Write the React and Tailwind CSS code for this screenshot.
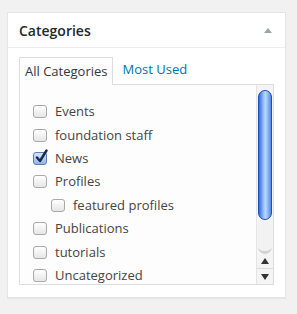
import React from "react";

const items = [
  { label: "Events" },
  { label: "foundation staff" },
  { label: "News", checked: true },
  { label: "Profiles" },
  { label: "featured profiles", child: true },
  { label: "Publications" },
  { label: "tutorials" },
  { label: "Uncategorized" },
];

const Checkbox = ({ checked }) => (
  <span
    className={
      "relative inline-block w-[14px] h-[13px] rounded-[3px] border shrink-0 " +
      (checked
        ? "border-[#5b7fb5] bg-gradient-to-b from-[#d6e6fb] to-[#8fb6ea]"
        : "border-[#a9a9a9] bg-gradient-to-b from-white to-[#e6e6e6]")
    }
  >
    {checked && (
      <svg
        className="absolute left-[1px] top-[-4px]"
        width="13"
        height="15"
        viewBox="0 0 13 15"
      >
        <path
          d="M2 8.5 L5 12 L11.5 1.5"
          fill="none"
          stroke="#1c2a4a"
          strokeWidth="2.4"
          strokeLinecap="round"
          strokeLinejoin="round"
        />
      </svg>
    )}
  </span>
);

const Scrollbar = () => (
  <div className="w-[17px] shrink-0 flex flex-col border-l border-[#e4e4e4] bg-[#f4f4f4]">
    <div className="flex-1 flex flex-col items-center pt-[5px]">
      <div className="w-[14px] rounded-t-[7px] bg-gradient-to-b from-[#ececec] to-[#f7f7f7] flex-1 flex flex-col">
        <div className="h-[130px] w-[14px] rounded-full border border-[#1b4fb4] bg-[linear-gradient(to_right,#2f6ee0,#9cc4f7_40%,#bcd8fb_55%,#4d8ae8)]" />
        <div className="flex-1 rounded-b-[7px] border-b-[3px] border-[#d3d3d3] bg-[#f2f2f2]" />
      </div>
    </div>
    <div className="h-[15px] flex items-center justify-center border-b border-[#dcdcdc]">
      <span className="w-0 h-0 border-l-[4px] border-r-[4px] border-b-[6px] border-l-transparent border-r-transparent border-b-[#333]" />
    </div>
    <div className="h-[15px] flex items-center justify-center">
      <span className="w-0 h-0 border-l-[4px] border-r-[4px] border-t-[6px] border-l-transparent border-r-transparent border-t-[#333]" />
    </div>
  </div>
);

export default function App() {
  return (
    <div
      className="w-[297px] h-[314px] bg-[#f1f1f1] pt-[12px] pl-[7px]"
      style={{ fontFamily: '"Open Sans", "Liberation Sans", sans-serif' }}
    >
      <div className="w-[279px] h-[286px] bg-white border border-[#e5e5e5] shadow-[0_1px_1px_rgba(0,0,0,0.04)]">
        <div className="h-[35px] flex items-center justify-between pl-[11px] pr-[13px] border-b border-[#eeeeee]">
          <h2 className="text-[14px] font-semibold text-[#23282d] leading-none pt-[1px]">
            Categories
          </h2>
          <span className="w-0 h-0 border-l-[4px] border-r-[4px] border-b-[5px] border-l-transparent border-r-transparent border-b-[#a0a5aa] mt-[1px]" />
        </div>

        <div className="pt-[8px] pl-[11px]">
          <div className="flex items-end">
            <div className="h-[28px] px-[5px] flex items-center border border-b-0 border-[#dddddd] bg-[#fdfdfd] text-[13px] text-[#32373c] relative top-[1px] z-10">
              All Categories
            </div>
            <div className="h-[28px] pl-[9px] flex items-center text-[13px] text-[#0073aa]">
              Most Used
            </div>
          </div>

          <div className="w-[255px] h-[201px] border border-[#dddddd] bg-[#fdfdfd] flex">
            <ul className="flex-1 overflow-hidden pt-[15px] pl-[13px]">
              {items.map((it) => (
                <li
                  key={it.label}
                  className={
                    "h-[23.43px] flex items-center gap-[8px] text-[13px] text-[#444] " +
                    (it.child ? "pl-[18px]" : "")
                  }
                >
                  <Checkbox checked={it.checked} />
                  <span className="leading-none">{it.label}</span>
                </li>
              ))}
            </ul>
            <Scrollbar />
          </div>
        </div>
      </div>
    </div>
  );
}
